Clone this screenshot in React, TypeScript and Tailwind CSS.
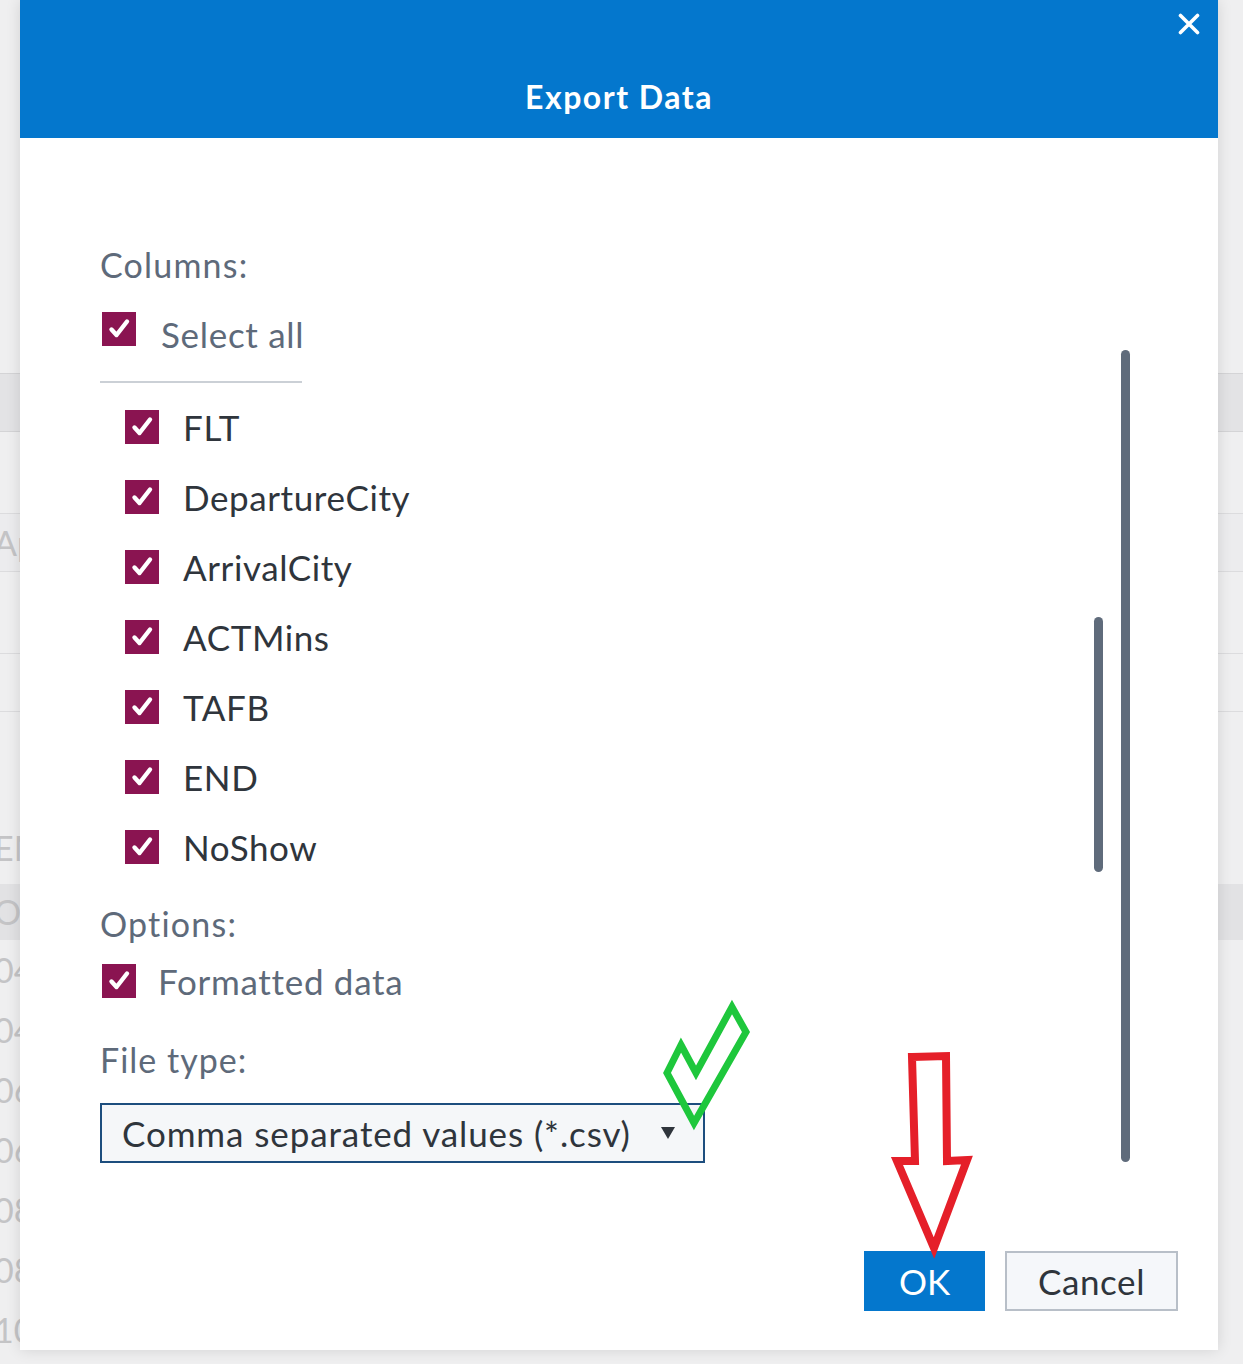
import React from 'react';

// Column names shown in the list
const columns = ['FLT', 'DepartureCity', 'ArrivalCity', 'ACTMins', 'TAFB', 'END', 'NoShow'];

// Faint rows of the page that sits behind the dialog
const backRows: { h: string; band?: string; left?: string }[] = [
    { h: 'h-[373px]' },
    { h: 'h-[59px]', band: 'bg-[#e3e3e5] border-y border-[#d4d4d6]' },
    { h: 'h-[81px]' },
    { h: 'h-[59px]', band: 'bg-[#ececee] border-y border-[#dcdcde]', left: 'Ap' },
    { h: 'h-[81px]' },
    { h: 'h-[59px]', band: 'border-y border-[#dcdcde]' },
    { h: 'h-[100px]' },
    { h: 'h-[72px]', left: 'EM' },
    { h: 'h-[56px]', band: 'bg-[#e2e2e4]', left: 'O' },
    { h: 'h-[60px]', left: '04' },
    { h: 'h-[60px]', left: '04' },
    { h: 'h-[60px]', left: '06' },
    { h: 'h-[60px]', left: '06' },
    { h: 'h-[60px]', left: '08' },
    { h: 'h-[60px]', left: '08' },
    { h: 'h-[60px]', left: '10' },
];

// Maroon checkbox
const Check = () => (
    <span className="flex h-[34px] w-[34px] shrink-0 bg-[#8a1451]">
        <svg viewBox="0 0 34 34" className="h-[34px] w-[34px]">
            <path d="M9.5 17.5l5 5.5L25 9.5" fill="none" stroke="white" strokeWidth="4.4" strokeLinecap="round" strokeLinejoin="round" />
        </svg>
    </span>
);

// Export dialog page
const App = () => {
    return (
        <div className="relative h-[1364px] w-[1243px] overflow-hidden bg-[#efeff0] font-['Lato',sans-serif]">
            {/* Page behind the dialog */}
            <div className="flex flex-col">
                {backRows.map((r, i) => (
                    <div key={i} className={`${r.h} ${r.band ?? ''} flex items-center pl-0`}>
                        {r.left && <span className="-ml-[6px] text-[34px] leading-none text-[#c4c4c6]">{r.left}</span>}
                    </div>
                ))}
            </div>

            {/* Dialog */}
            <div className="absolute left-[20px] top-0 flex h-[1350px] w-[1198px] flex-col bg-white shadow-[0_0_14px_rgba(0,0,0,0.12)]">
                <div className="relative h-[138px] shrink-0 bg-[#0477cd] pt-[76px] text-center">
                    <h1 className="text-[32px] font-bold leading-[42px] tracking-[1.5px] text-white">Export Data</h1>
                    <button className="absolute right-[18px] top-[13px] h-[22px] w-[22px]">
                        <svg viewBox="0 0 22 22" className="h-[22px] w-[22px]">
                            <path d="M2.5 2.5l17 17M19.5 2.5l-17 17" stroke="white" strokeWidth="3.6" strokeLinecap="round" />
                        </svg>
                    </button>
                </div>

                <div className="relative flex flex-1 flex-col pl-[80px] pt-[107px]">
                    <p className="h-[40px] text-[34px] leading-[40px] tracking-[1.2px] text-[#5e6a7a]">Columns:</p>

                    <div className="mt-[27px] flex items-start gap-[25px] pl-[2px]">
                        <Check />
                        <span className="mt-[2px] text-[35px] leading-[40px] tracking-[0.7px] text-[#5e6a7a]">Select all</span>
                    </div>

                    <div className="mt-[27px] h-[2px] w-[202px] bg-[#cbd0d6]" />

                    <ul className="mt-[9px] pl-[25px]">
                        {columns.map((c) => (
                            <li key={c} className="flex h-[70px] items-center gap-[24px]">
                                <Check />
                                <span className="text-[35px] leading-[40px] tracking-[0.6px] text-[#2f353c]">{c}</span>
                            </li>
                        ))}
                    </ul>

                    <p className="mt-[22px] h-[40px] text-[34px] leading-[40px] tracking-[1.2px] text-[#5e6a7a]">Options:</p>

                    <div className="mt-[20px] flex h-[34px] items-center gap-[22px] pl-[2px]">
                        <Check />
                        <span className="text-[35px] leading-[40px] tracking-[0.7px] text-[#5e6a7a]">Formatted data</span>
                    </div>

                    <p className="mt-[42px] h-[40px] text-[34px] leading-[40px] tracking-[1px] text-[#5e6a7a]">File type:</p>

                    <div className="mt-[23px] flex h-[60px] w-[605px] items-center justify-between border-2 border-[#1d4e7e] bg-[#f5f7f9] pl-[20px] pr-[28px]">
                        <span className="text-[35px] leading-[40px] tracking-[0.9px] text-[#2f353c]">Comma separated values (*.csv)</span>
                        <svg viewBox="0 0 14 12" className="h-[12px] w-[14px]">
                            <path d="M0 0h14L7 12z" fill="#2f353c" />
                        </svg>
                    </div>

                    {/* Scrollbars */}
                    <div className="absolute left-[1101px] top-[212px] h-[812px] w-[9px] rounded-full bg-[#5f6b7b]" />
                    <div className="absolute left-[1074px] top-[479px] h-[255px] w-[9px] rounded-full bg-[#5f6b7b]" />
                </div>

                <div className="flex justify-end gap-[20px] pb-[39px] pr-[40px]">
                    <button className="h-[60px] w-[121px] bg-[#0477cd] text-[35px] leading-[40px] text-white">OK</button>
                    <button className="h-[60px] w-[173px] border-2 border-[#b8bfc8] bg-[#f5f7fa] text-[35px] leading-[40px] tracking-[0.6px] text-[#2f353c]">Cancel</button>
                </div>
            </div>

            {/* Hand-drawn annotations */}
            <svg className="pointer-events-none absolute left-0 top-0 h-[1364px] w-[1243px]" viewBox="0 0 1243 1364">
                <polygon points="681,1045 696,1073 732,1007 746,1032 694,1123 667,1073" fill="none" stroke="#1ec73c" strokeWidth="7" />
                <polygon points="912,1057 946,1056 947,1161 967,1160 934,1248 897,1161 915,1161" fill="none" stroke="#e51f29" strokeWidth="8" />
            </svg>
        </div>
    );
};

export default App;
